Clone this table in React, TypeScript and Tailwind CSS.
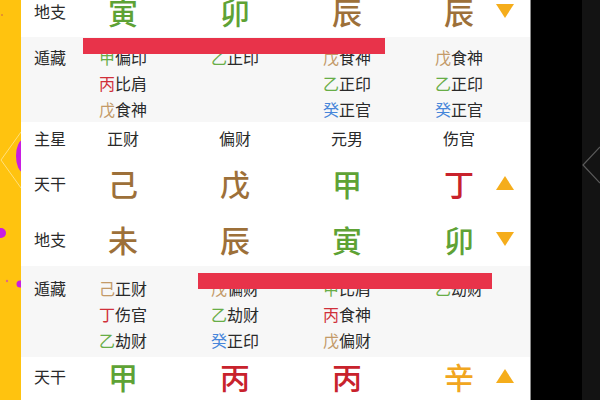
import React from "react"

type Tone = "g" | "b" | "r" | "u" | "y"

const big: Record<Tone, string> = {
  g: "text-[#5ea235]",
  b: "text-[#9d7039]",
  r: "text-[#c8222c]",
  u: "text-[#3f7fd4]",
  y: "text-[#f1a620]",
}

const small: Record<Tone, string> = {
  g: "text-[#68ad47]",
  b: "text-[#c39a68]",
  r: "text-[#d0303a]",
  u: "text-[#4786da]",
  y: "text-[#f1a620]",
}

type Hidden = [string, Tone, string][]

const topHidden: Hidden[] = [
  [["甲", "g", "偏印"], ["丙", "r", "比肩"], ["戊", "b", "食神"]],
  [["乙", "g", "正印"]],
  [["戊", "b", "食神"], ["乙", "g", "正印"], ["癸", "u", "正官"]],
  [["戊", "b", "食神"], ["乙", "g", "正印"], ["癸", "u", "正官"]],
]

const bottomHidden: Hidden[] = [
  [["己", "b", "正财"], ["丁", "r", "伤官"], ["乙", "g", "劫财"]],
  [["戊", "b", "偏财"], ["乙", "g", "劫财"], ["癸", "u", "正印"]],
  [["甲", "g", "比肩"], ["丙", "r", "食神"], ["戊", "b", "偏财"]],
  [["乙", "g", "劫财"]],
]

function Arrow({ up }: { up?: boolean }) {
  return (
    <svg width="20" height="16" viewBox="0 0 20 16">
      {up ? (
        <polygon points="10,1 19,15 1,15" fill="#f5ad1b" />
      ) : (
        <polygon points="1,1 19,1 10,15" fill="#f5ad1b" />
      )}
    </svg>
  )
}

function Label({ text, top }: { text: string; top?: boolean }) {
  return (
    <div
      className={`w-[46px] shrink-0 pl-[13px] text-[16px] text-[#2a2a2a] ${
        top ? "self-start leading-[26px]" : ""
      }`}
    >
      {text}
    </div>
  )
}

function BigRow({
  label,
  chars,
  arrow,
  className,
}: {
  label: string
  chars: [string, Tone][]
  arrow: "up" | "down"
  className: string
}) {
  return (
    <div className={`flex items-center bg-white ${className}`}>
      <Label text={label} />
      {chars.map(([c, t], i) =>
        i < 3 ? (
          <div
            key={i}
            className={`w-[112px] text-center text-[30px] font-medium leading-none ${big[t]}`}
          >
            {c}
          </div>
        ) : (
          <div key={i} className="grid w-[112px] grid-cols-[1fr_auto_1fr] items-center">
            <div />
            <div className={`text-[30px] font-medium leading-none ${big[t]}`}>{c}</div>
            <div className="flex justify-end">
              <Arrow up={arrow === "up"} />
            </div>
          </div>
        )
      )}
    </div>
  )
}

function HiddenRow({ cols, className }: { cols: Hidden[]; className: string }) {
  return (
    <div className={`flex bg-[#f7f7f7] ${className}`}>
      <Label text="遁藏" top />
      {cols.map((lines, i) => (
        <div key={i} className="flex w-[112px] flex-col items-center">
          {lines.map(([s, t, name], j) => (
            <div key={j} className="text-[16px] leading-[26px] text-[#2a2a2a]">
              <span className={small[t]}>{s}</span>
              {name}
            </div>
          ))}
        </div>
      ))}
    </div>
  )
}

export default function App() {
  return (
    <div className="flex h-[400px] w-[600px] overflow-hidden bg-black font-['Noto_Sans_CJK_SC',sans-serif]">
      {/* left yellow strip */}
      <div className="relative h-full w-[21px] shrink-0 bg-[#ffc30f]">
        <svg className="absolute inset-0" width="21" height="400" viewBox="0 0 21 400">
          <polyline points="21,132 1,160 21,188" fill="none" stroke="#ffe07a" strokeWidth="1" />
          <ellipse cx="23" cy="156" rx="7" ry="16" fill="#c81ee2" />
          <circle cx="1" cy="233" r="5" fill="#c81ee2" />
          <circle cx="7" cy="281" r="1.2" fill="#e06a8a" />
          <circle cx="20" cy="284" r="3.5" fill="#c81ee2" />
          <circle cx="2" cy="15" r="1" fill="#e0803a" />
        </svg>
      </div>

      {/* main chart panel */}
      <div className="relative h-full w-[509px] shrink-0 overflow-hidden bg-white">
        <BigRow
          label="地支"
          className="-mt-[16px] h-[53px]"
          arrow="down"
          chars={[["寅", "g"], ["卯", "g"], ["辰", "b"], ["辰", "b"]]}
        />
        <HiddenRow cols={topHidden} className="pt-[7px]" />
        <div className="flex h-[32px] items-center bg-white text-[16px] text-[#2a2a2a]">
          <Label text="主星" />
          {["正财", "偏财", "元男", "伤官"].map((s) => (
            <div key={s} className="w-[112px] text-center">
              {s}
            </div>
          ))}
        </div>
        <BigRow
          label="天干"
          className="h-[58px]"
          arrow="up"
          chars={[["己", "b"], ["戊", "b"], ["甲", "g"], ["丁", "r"]]}
        />
        <BigRow
          label="地支"
          className="h-[54px]"
          arrow="down"
          chars={[["未", "b"], ["辰", "b"], ["寅", "g"], ["卯", "g"]]}
        />
        <HiddenRow cols={bottomHidden} className="pt-[9px] pb-[4px]" />
        <BigRow
          label="天干"
          className="h-[38px]"
          arrow="up"
          chars={[["甲", "g"], ["丙", "r"], ["丙", "r"], ["辛", "y"]]}
        />

        {/* red highlight marks */}
        <div className="absolute left-[62px] top-[38px] h-[16px] w-[302px] bg-[#e8334a]" />
        <div className="absolute left-[177px] top-[273px] h-[16px] w-[294px] bg-[#e8334a]" />
      </div>

      {/* right dark area */}
      <div className="h-full w-[52px] shrink-0 border-l border-[#8a8a8a] bg-black" />
      <div className="h-full w-[18px] shrink-0 bg-[#131313]">
        <svg width="18" height="400" viewBox="0 0 18 400">
          <polyline points="18,147 1,165 18,183" fill="none" stroke="#5a5a5a" strokeWidth="1.2" />
        </svg>
      </div>
    </div>
  )
}
